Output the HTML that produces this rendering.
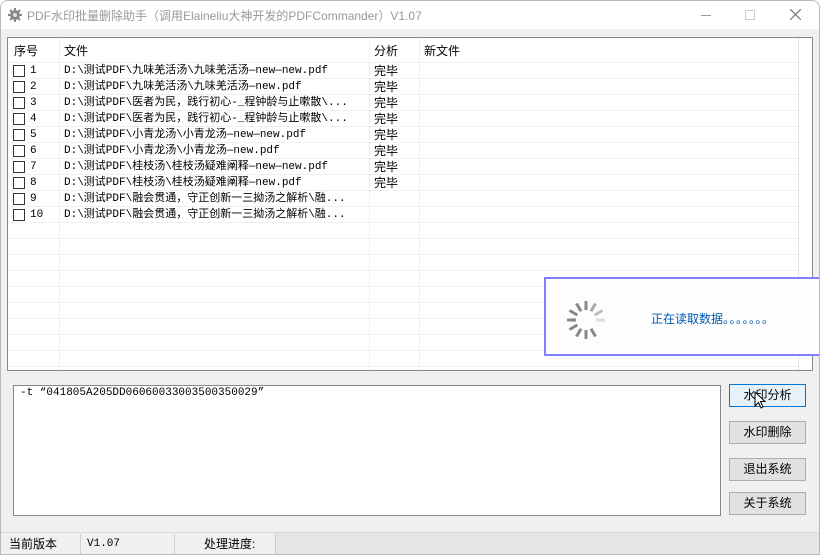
<!DOCTYPE html>
<html><head><meta charset="utf-8"><style>
*{margin:0;padding:0;box-sizing:border-box}
body{width:820px;height:555px;background:#fff;position:relative;overflow:hidden;font-family:"Liberation Sans","Noto Sans CJK SC",sans-serif;font-size:12px;color:#000}
.win{position:absolute;left:0;top:0;width:820px;height:555px;background:#f0f0f0;border:1px solid #b8b8b8;border-radius:8px 8px 0 0;overflow:hidden}
.title{position:absolute;left:0;top:0;width:820px;height:28px;background:#fff;color:#999;font-size:12px}
.ab{position:absolute;white-space:nowrap}
.list{position:absolute;left:6px;top:36px;width:806px;height:334px;background:#fff;border:1px solid #828790;overflow:hidden}
.hl{position:absolute;left:0;width:790px;height:1px;background:#f0f0f0}
.vl{position:absolute;top:0;width:1px;height:334px;background:#f0f0f0}
.row{position:absolute;left:0;width:790px;height:16px;line-height:16px;font-family:"Liberation Mono","Noto Sans CJK SC",monospace;font-size:11px;white-space:nowrap}
.cb{position:absolute;left:5px;top:2px;width:12px;height:12px;border:1px solid #333;background:#fff}
.ok{position:absolute;left:366px;font-family:'Liberation Sans','Noto Sans CJK SC',sans-serif;font-size:12px}
.btn{position:absolute;left:728px;width:77px;height:23px;border:1px solid #adadad;background:#e1e1e1;text-align:center;line-height:21px;font-size:12px}
.sb{position:absolute;top:533px;height:20px;line-height:20px;font-size:12px;white-space:nowrap}
</style></head><body>
<div class="win">
<div class="title">
<svg class="ab" style="left:7px;top:7px" width="14" height="14" viewBox="0 0 14 14"><g stroke="#888" stroke-width="2"><line x1="7" y1="0" x2="7" y2="14"/><line x1="0" y1="7" x2="14" y2="7"/><line x1="2" y1="2" x2="12" y2="12"/><line x1="12" y1="2" x2="2" y2="12"/></g><circle cx="7" cy="7" r="5" fill="#888"/><circle cx="7" cy="7" r="2" fill="#ddd"/></svg>
<div class="ab" style="left:26px;top:6px;color:#999">PDF水印批量删除助手（调用Elaineliu大神开发的PDFCommander）V1.07</div>
<div class="ab" style="left:700px;top:14px;width:10px;height:1px;background:#999"></div>
<div class="ab" style="left:744px;top:9px;width:10px;height:10px;border:1px solid #ccc"></div>
<svg class="ab" style="left:789px;top:8px" width="11" height="11"><path d="M0 0L11 11M11 0L0 11" stroke="#777" stroke-width="1.2"/></svg>
</div>
<div class="list">
<div class="ab" style="left:6px;top:4px">序号</div>
<div class="ab" style="left:56px;top:4px">文件</div>
<div class="ab" style="left:366px;top:4px">分析</div>
<div class="ab" style="left:416px;top:4px">新文件</div>
<div class="vl" style="left:51px"></div><div class="vl" style="left:361px"></div><div class="vl" style="left:411px"></div><div class="vl" style="left:790px;background:#e4e4e4"></div>
<div class="hl" style="top:24px"></div><div class="hl" style="top:40px"></div><div class="hl" style="top:56px"></div><div class="hl" style="top:72px"></div><div class="hl" style="top:88px"></div><div class="hl" style="top:104px"></div><div class="hl" style="top:120px"></div><div class="hl" style="top:136px"></div><div class="hl" style="top:152px"></div><div class="hl" style="top:168px"></div><div class="hl" style="top:184px"></div><div class="hl" style="top:200px"></div><div class="hl" style="top:216px"></div><div class="hl" style="top:232px"></div><div class="hl" style="top:248px"></div><div class="hl" style="top:264px"></div><div class="hl" style="top:280px"></div><div class="hl" style="top:296px"></div><div class="hl" style="top:312px"></div><div class="hl" style="top:328px"></div>
<div class="row" style="top:25px"><div class="cb"></div><span class="ab" style="left:22px">1</span><span class="ab" style="left:56px">D:\测试PDF\九味羌活汤\九味羌活汤—new—new.pdf</span><span class="ok">完毕</span></div>
<div class="row" style="top:41px"><div class="cb"></div><span class="ab" style="left:22px">2</span><span class="ab" style="left:56px">D:\测试PDF\九味羌活汤\九味羌活汤—new.pdf</span><span class="ok">完毕</span></div>
<div class="row" style="top:57px"><div class="cb"></div><span class="ab" style="left:22px">3</span><span class="ab" style="left:56px">D:\测试PDF\医者为民，践行初心-_程钟龄与止嗽散\...</span><span class="ok">完毕</span></div>
<div class="row" style="top:73px"><div class="cb"></div><span class="ab" style="left:22px">4</span><span class="ab" style="left:56px">D:\测试PDF\医者为民，践行初心-_程钟龄与止嗽散\...</span><span class="ok">完毕</span></div>
<div class="row" style="top:89px"><div class="cb"></div><span class="ab" style="left:22px">5</span><span class="ab" style="left:56px">D:\测试PDF\小青龙汤\小青龙汤—new—new.pdf</span><span class="ok">完毕</span></div>
<div class="row" style="top:105px"><div class="cb"></div><span class="ab" style="left:22px">6</span><span class="ab" style="left:56px">D:\测试PDF\小青龙汤\小青龙汤—new.pdf</span><span class="ok">完毕</span></div>
<div class="row" style="top:121px"><div class="cb"></div><span class="ab" style="left:22px">7</span><span class="ab" style="left:56px">D:\测试PDF\桂枝汤\桂枝汤疑难阐释—new—new.pdf</span><span class="ok">完毕</span></div>
<div class="row" style="top:137px"><div class="cb"></div><span class="ab" style="left:22px">8</span><span class="ab" style="left:56px">D:\测试PDF\桂枝汤\桂枝汤疑难阐释—new.pdf</span><span class="ok">完毕</span></div>
<div class="row" style="top:153px"><div class="cb"></div><span class="ab" style="left:22px">9</span><span class="ab" style="left:56px">D:\测试PDF\融会贯通，守正创新一三拗汤之解析\融...</span></div>
<div class="row" style="top:169px"><div class="cb"></div><span class="ab" style="left:22px">10</span><span class="ab" style="left:56px">D:\测试PDF\融会贯通，守正创新一三拗汤之解析\融...</span></div>
</div>
<div class="ab" style="left:543px;top:276px;width:280px;height:79px;background:#fdfdfd;border:2px solid #8080ff">
<svg class="ab" style="left:16px;top:17px" width="48" height="48" viewBox="-24 -24 48 48"><g stroke-width="3">
<line x1="0" y1="-19" x2="0" y2="-10" stroke="#888"/><line x1="9.5" y1="-16.5" x2="5" y2="-8.7" stroke="#aaa"/><line x1="16.5" y1="-9.5" x2="8.7" y2="-5" stroke="#bbb"/><line x1="19" y1="0" x2="10" y2="0" stroke="#ddd"/><line x1="9.5" y1="16.5" x2="5" y2="8.7" stroke="#888"/><line x1="0" y1="19" x2="0" y2="10" stroke="#888"/><line x1="-9.5" y1="16.5" x2="-5" y2="8.7" stroke="#888"/><line x1="-16.5" y1="9.5" x2="-8.7" y2="5" stroke="#888"/><line x1="-19" y1="0" x2="-10" y2="0" stroke="#888"/><line x1="-16.5" y1="-9.5" x2="-8.7" y2="-5" stroke="#888"/><line x1="-9.5" y1="-16.5" x2="-5" y2="-8.7" stroke="#888"/></g></svg>
<div class="ab" style="left:105px;top:31px;color:#0058b0;font-size:12px">正在读取数据<span style="letter-spacing:0.5px">。。。。。。。</span></div>
</div>
<div class="ab" style="left:12px;top:384px;width:708px;height:131px;background:#fff;border:1px solid #828790;font-family:'Liberation Mono','Noto Sans CJK SC',monospace;font-size:11px;padding:1px 0 0 6px">-t “041805A205DD06060033003500350029”</div>
<div class="btn" style="top:383px;border-color:#0078d7;background:#e5f1fb">水印分析</div>
<svg class="ab" style="left:753px;top:390px" width="12" height="20" viewBox="0 0 12 20"><path d="M1 1L1 15L4.5 11.5L7 17L9 16L6.5 10.5L11 10.5Z" fill="#fff" stroke="#000" stroke-width="1"/></svg>
<div class="btn" style="top:420px">水印删除</div>
<div class="btn" style="top:457px">退出系统</div>
<div class="btn" style="top:491px">关于系统</div>
<div class="ab" style="left:0;top:531px;width:820px;height:1px;background:#d8d8d8"></div>
<div class="sb" style="left:8px">当前版本</div>
<div class="ab" style="left:79px;top:533px;width:1px;height:20px;background:#d0d0d0"></div>
<div class="sb" style="left:86px;font-family:'Liberation Mono',monospace;font-size:11px">V1.07</div>
<div class="ab" style="left:173px;top:533px;width:1px;height:20px;background:#d0d0d0"></div>
<div class="sb" style="left:203px">处理进度:</div>
<div class="ab" style="left:274px;top:532px;width:546px;height:23px;background:#e6e6e6;border-left:1px solid #ccc"></div>
</div>
</body></html>
